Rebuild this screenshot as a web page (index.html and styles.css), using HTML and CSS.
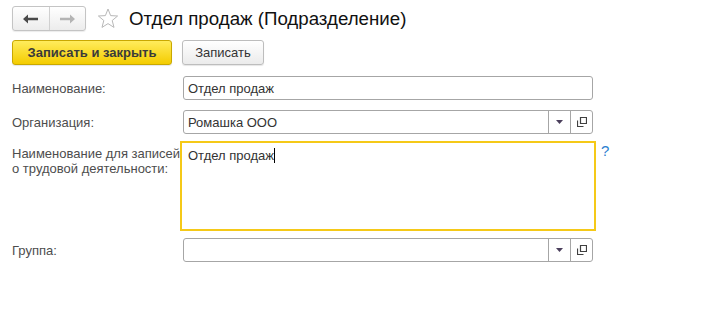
FILE: index.html
```html
<!DOCTYPE html>
<html lang="ru">
<head>
<meta charset="utf-8">
<link rel="stylesheet" href="styles.css">
</head>
<body>
<div class="page">
  <div class="header">
    <div class="nav">
      <button class="nav-btn" aria-label="Назад">
        <svg width="16" height="10" viewBox="0 0 16 10"><path d="M0 5 L5 0.5 V3.7 H15 V6.3 H5 V9.5 Z" fill="#4a4a4a"/></svg>
      </button>
      <button class="nav-btn" aria-label="Вперёд">
        <svg width="16" height="10" viewBox="0 0 16 10"><path d="M16 5 L11 0.5 V3.7 H1 V6.3 H11 V9.5 Z" fill="#b4b4b4"/></svg>
      </button>
    </div>
    <svg class="star" width="22" height="21" viewBox="0 0 22 21"><path d="M11 1 L13.6 7.6 L20.6 8 L15.2 12.5 L17 19.4 L11 15.6 L5 19.4 L6.8 12.5 L1.4 8 L8.4 7.6 Z" fill="none" stroke="#b8b8b8" stroke-width="1" stroke-linejoin="round"/></svg>
    <h1 class="title">Отдел продаж (Подразделение)</h1>
  </div>
  <div class="toolbar">
    <button class="btn btn-primary">Записать и закрыть</button>
    <button class="btn">Записать</button>
  </div>
  <div class="form">
    <label class="label">Наименование:</label>
    <div class="field"><span class="value">Отдел продаж</span></div>
    <div></div>

    <label class="label">Организация:</label>
    <div class="field field-select">
      <span class="value">Ромашка ООО</span>
      <span class="sbtn"><svg width="7" height="4" viewBox="0 0 7 4"><path d="M0 0 H7 L3.5 4 Z" fill="#4b3f5c"/></svg></span>
      <span class="sbtn"><svg width="10" height="10" viewBox="0 0 10 10"><path d="M3.5 0.5 H9.5 V6.5 H3.5 Z M0.5 3.5 V9.5 H6.5" fill="none" stroke="#404040" stroke-width="1.2"/></svg></span>
    </div>
    <div></div>

    <label class="label label-multi">Наименование для записей о трудовой деятельности:</label>
    <div class="area"><span class="value">Отдел продаж</span><span class="caret"></span></div>
    <a class="help">?</a>

    <label class="label">Группа:</label>
    <div class="field field-select">
      <span class="value"></span>
      <span class="sbtn"><svg width="7" height="4" viewBox="0 0 7 4"><path d="M0 0 H7 L3.5 4 Z" fill="#4b3f5c"/></svg></span>
      <span class="sbtn"><svg width="10" height="10" viewBox="0 0 10 10"><path d="M3.5 0.5 H9.5 V6.5 H3.5 Z M0.5 3.5 V9.5 H6.5" fill="none" stroke="#404040" stroke-width="1.2"/></svg></span>
    </div>
    <div></div>
  </div>
</div>
</body>
</html>
```
FILE: styles.css
```css
* { box-sizing: border-box; }
html, body { margin: 0; padding: 0; background: #fff; }
body {
  font-family: "Liberation Sans", Arial, sans-serif;
  font-size: 13px;
  color: #333;
}
.page { padding: 6px 0 0 12px; width: 703px; }
.header { display: flex; align-items: center; height: 25px; }
.nav {
  display: flex;
  width: 74px;
  height: 25px;
  border: 1px solid #c4c4c4;
  border-radius: 3px;
  background: linear-gradient(#ffffff, #ececec);
  box-shadow: 0 1px 1px rgba(0,0,0,0.08);
}
.nav-btn {
  flex: 1;
  border: 0;
  background: transparent;
  padding: 0;
  display: flex;
  align-items: center;
  justify-content: center;
}
.nav-btn + .nav-btn { border-left: 1px solid #d0d0d0; }
.star { margin-left: 11px; margin-top: -1px; }
.title {
  margin: 0 0 0 10px;
  font-weight: normal;
  font-size: 18.7px;
  color: #111;
  line-height: 25px;
}
.toolbar { display: flex; gap: 10px; margin-top: 9px; height: 25px; }
.btn {
  font-family: inherit;
  font-size: 13px;
  height: 25px;
  width: 82px;
  padding: 0;
  border: 1px solid #bdbdbd;
  border-radius: 3px;
  background: linear-gradient(#ffffff, #ebebeb);
  color: #333;
  box-shadow: 0 1px 1px rgba(0,0,0,0.1);
}
.btn-primary {
  width: 160px;
  font-weight: bold;
  border-color: #c9a800;
  background: linear-gradient(#ffec5c, #f4cc00);
  color: #3a3a3a;
}
.form {
  display: grid;
  grid-template-columns: 171px 410px 20px;
  row-gap: 10px;
  margin-top: 11px;
  align-items: center;
}
.label { color: #4d4d4d; line-height: 15px; }
.label-multi { align-self: start; padding-top: 2px; }
.field {
  height: 24px;
  border: 1px solid #a6a6a6;
  border-radius: 3px;
  display: flex;
  align-items: center;
  background: #fff;
}
.value { flex: 1; padding-left: 4px; color: #333; }
.sbtn {
  width: 22px;
  height: 22px;
  border-left: 1px solid #a6a6a6;
  display: flex;
  align-items: center;
  justify-content: center;
}
.area {
  height: 84px;
  align-self: start;
  padding: 4px 4px;
  outline: 2px solid #f5c918;
  outline-offset: 1px;
  display: flex;
  align-items: flex-start;
}
.area .value { flex: none; padding-left: 1px; }
.caret { width: 1px; height: 15px; background: #000; }
.help {
  align-self: start;
  color: #2b7fd0;
  font-size: 15px;
  margin-left: 8px;
  margin-top: -2px;
}
```
